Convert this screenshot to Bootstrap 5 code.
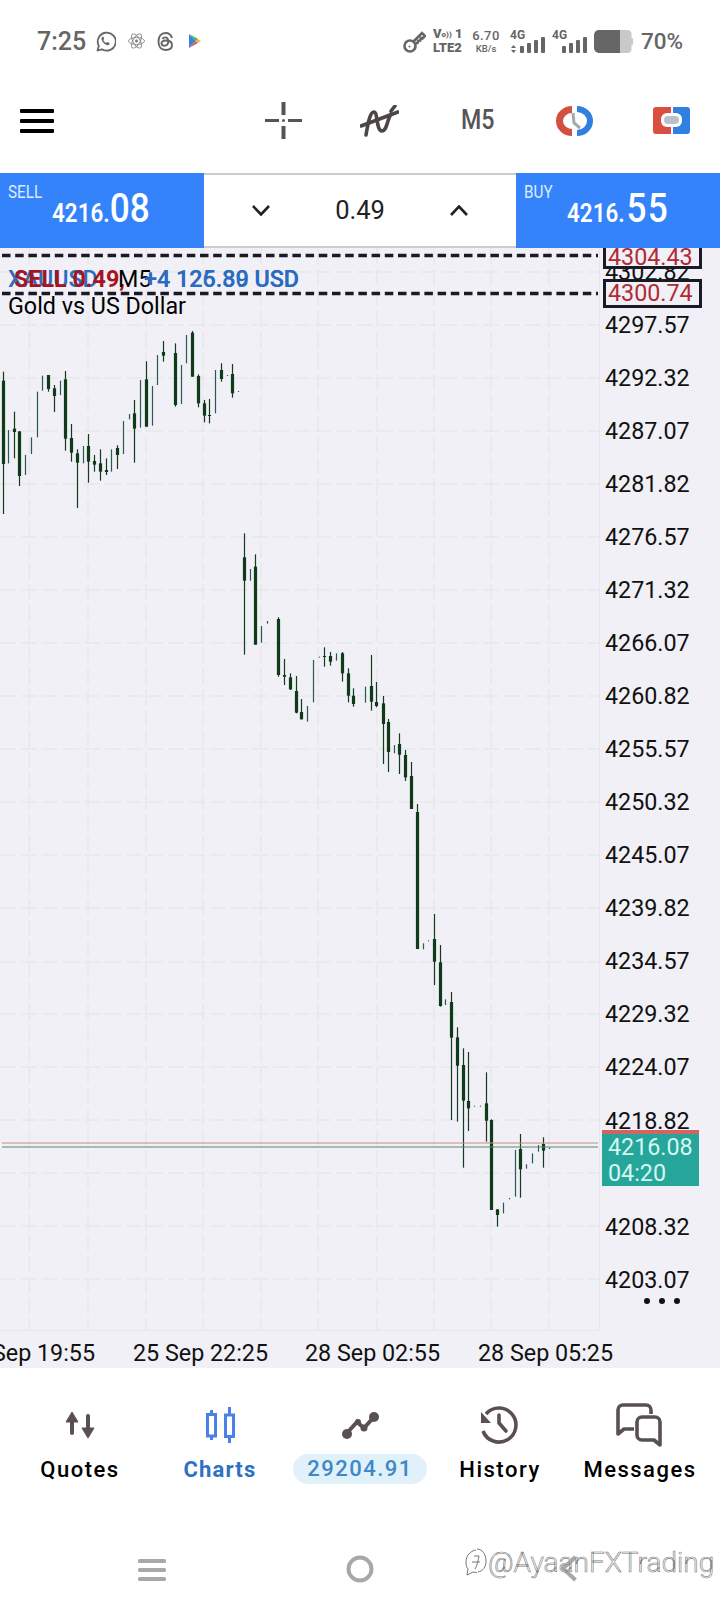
<!DOCTYPE html>
<html lang="en">
<head>
<meta charset="utf-8">
<title>Chart</title>
<link href="https://cdn.jsdelivr.net/npm/bootstrap@5.3.0/dist/css/bootstrap.min.css" rel="stylesheet">
<style>
html,body{margin:0;background:#fff}
body{width:720px;height:1608px;overflow:hidden;font-family:Roboto,"Liberation Sans",sans-serif;color:#000}
svg{display:block;flex:none}
.st-bar{height:82px;padding:0 38px 0 37px;color:#666}
.st-time{font-size:25px;font-weight:500;line-height:1;margin-right:10px;width:49px}
.st-volte{width:28px;margin-left:7px;font-weight:700;line-height:1}
.st-volte b{display:block;font-size:13px;white-space:nowrap;height:14px}
.st-volte i{font-style:normal;font-size:8px;vertical-align:1px}
.st-speed{width:28px;margin-left:11px;text-align:center;font-weight:500;line-height:1}
.st-speed b{display:block;font-weight:500;font-size:13px;letter-spacing:.4px;height:15px}
.st-speed small{display:block;font-size:9.5px}
.st-pct{font-size:22.5px;font-weight:500;margin-left:8px;width:41px;line-height:1;white-space:nowrap}
.tool-bar{height:91px;padding:0 0 14px 20px}
.m5{width:33px;margin-left:62px;font-size:27px;font-weight:500;color:#555;line-height:1;transform:scaleX(.86);transform-origin:left center}
.trade-bar{height:75px}
.quote-box{width:204px;background:#3583fb;color:#fff;padding-left:8px}
.quote-lbl{display:block;height:26px;margin-top:6px;font-size:18px;line-height:26px;color:#dcebff;transform:scaleX(.85);transform-origin:left center}
.quote-num{margin-top:-15px;line-height:38px;height:38px;white-space:nowrap;transform:scaleX(.88);transform-origin:left center;font-weight:600;font-size:25.5px}
.quote-num span{font-size:40px;font-weight:500}
.sell-num{margin-left:44px}
.buy-num{margin-left:43px}
.buy-num span{margin-left:2px;letter-spacing:1.5px}
.lot-box{flex:1;border-top:2px solid #ccc;border-bottom:2px solid #ccc;padding:0 48px;font-size:25.5px;color:#222;background:#fff}
.chart-area{height:1120px;background:#f0f0f6;overflow:hidden}
.chart-svg{position:absolute;left:0;top:0}
.axis-col{position:absolute;left:605px;top:-2.500px;width:100px}
.axis-col div{height:53.07px;line-height:53.07px;font-size:23.3px;color:#111;white-space:nowrap}
.over-txt{position:absolute;font-size:23.300px;line-height:28px;white-space:nowrap}
.t-blue{color:#2b6cc0;font-weight:500}
.t-red{color:#a8141e;font-weight:700}
.price-tag{position:absolute;left:603px;width:99px;background:#f0f0f6;border:3px solid #1a1a24;color:#b02a34;font-size:23.3px;padding-left:2px}
.cur-tag{position:absolute;left:602px;top:882px;width:97px;height:56px;background:#26a69a;border-top:4px solid #d26464;color:#d6f6f1;font-size:23.3px;line-height:26px;padding-left:6px}
.time-lbl{position:absolute;top:1091px;font-size:23.3px;line-height:28px;color:#111;white-space:nowrap}
.tab-bar{height:137px;padding:33px 10px 0}
.tab-item{width:140px}
.tab-lbl{height:30px;line-height:30px;margin-top:8px;font-size:22px;font-weight:500;letter-spacing:1.5px;white-space:nowrap}
.tab-on{color:#2d72c4;font-weight:700;letter-spacing:1.2px}
.tab-pill{width:134px;margin-top:7px;background:#e0f1fa;color:#3d88c8;letter-spacing:1.5px;font-weight:500}
.sys-bar{height:103px;padding-top:50px}
.wm-txt{position:absolute;left:488px;top:40px;font-size:28px;font-weight:300;color:rgba(255,255,255,.55);-webkit-text-stroke:.6px #777;line-height:36px;white-space:nowrap}
.wm-logo{position:absolute;left:464px;top:43px}
</style>
</head>
<body>
<div class="d-flex flex-column">

<div class="st-bar d-flex align-items-center">
  <span class="st-time">7:25</span>
  <svg width="21" height="21" viewBox="0 0 20 21" style="margin-left:-1px"><path d="M2 19.5l1.3-4.6A9 9 0 1 1 6.500 18.300Z" fill="none" stroke="#666" stroke-width="1.800" stroke-linejoin="round"/><path d="M6.800 5.800c-1.600 1.500-.8 4 1.300 6.200 2.100 2.100 4.700 2.900 6 1.300l-.4-1.500-2-.8-.9 1c-1.300-.6-2.500-1.800-3-3l.9-1-.8-2.200Z" fill="#666"/></svg>
  <svg width="17" height="20" viewBox="0 0 17 20" style="margin-left:12px" fill="none" stroke="#888" stroke-width=".9"><ellipse cx="8.500" cy="10" rx="8" ry="3.500" transform="rotate(60 8.500 10)"/><ellipse cx="8.500" cy="10" rx="8" ry="3.500" transform="rotate(-60 8.500 10)"/><ellipse cx="8.500" cy="10" rx="8" ry="3.500"/><circle cx="8.500" cy="10" r="1.200" fill="#777"/></svg>
  <svg width="17" height="19" viewBox="0 0 17 19" style="margin-left:12px" fill="none" stroke="#666" stroke-width="1.900"><path d="M15 6C14 2.500 11.500 1 8.500 1 4 1 1.500 4.500 1.500 9.500S4 18 8.500 18c4 0 6.500-2 6.500-5 0-3.500-3.500-4.500-6.500-4.500-2.500 0-4 1-4 2.700s1.500 2.500 3 2.500c2.500 0 3.700-2 3.700-4.500 0-2.200-1-3.800-3-3.800-1.300 0-2.200.6-2.800 1.500"/></svg>
  <svg width="12" height="14" viewBox="0 0 12 14" style="margin-left:15px"><path d="M0 0L7 7 0 14Z" fill="#3b82e0"/><path d="M0 0L9 5 7 7Z" fill="#4caf50"/><path d="M0 14L9 9 7 7Z" fill="#e2574c"/><path d="M9 5L12 7 9 9 7 7Z" fill="#f5b83d"/></svg>
  <div class="ms-auto d-flex align-items-center">
    <svg width="23" height="23" viewBox="0 0 23 23" fill="none" stroke="#666" stroke-width="2.600"><circle cx="7" cy="16" r="5.500"/><path d="M10.500 11.500L19 3l3 3-2.500 2.500-1.500-.5-.8 2.500-2 .3-.5 2-2 .7"/><circle cx="6.500" cy="16.500" r="1" fill="#666" stroke="none"/></svg>
    <div class="st-volte"><b>V<i>o))</i> 1</b><b>LTE2</b></div>
    <div class="st-speed"><b>6.70</b><small>KB/s</small></div>
    <svg width="78" height="25" viewBox="510 28 78 25" style="margin-left:10px" fill="#666"><text x="510" y="38" font-family="Roboto" font-size="12" font-weight="700">4G</text><path d="M511 47l2.500-3 2.500 3ZM511 49l2.500 3 2.500-3Z"/><rect x="520" y="45" width="4" height="7" rx="1"/><rect x="527" y="42" width="4" height="10" rx="1"/><rect x="534" y="39" width="4" height="13" rx="1"/><rect x="541" y="36" width="4" height="16" rx="1"/><text x="552" y="38" font-family="Roboto" font-size="12" font-weight="700">4G</text><rect x="562" y="45" width="4" height="7" rx="1"/><rect x="569" y="42" width="4" height="10" rx="1"/><rect x="576" y="39" width="4" height="13" rx="1"/><rect x="583" y="36" width="4" height="16" rx="1"/></svg>
    <svg width="39" height="23" viewBox="0 0 39 23" style="margin-left:6px"><rect x="20" y="0" width="17.500" height="23" rx="4" fill="#c9c9c9"/><rect x="37" y="8" width="2" height="7" rx="1" fill="#c9c9c9"/><path d="M5 0H26V23H5a5 5 0 0 1-5-5V5a5 5 0 0 1 5-5Z" fill="#666"/></svg>
    <span class="st-pct">70%</span>
  </div>
</div>

<div class="tool-bar d-flex align-items-center">
  <svg width="34" height="24" viewBox="0 0 34 24" fill="#000"><rect width="34" height="4" y="0" rx="1"/><rect width="34" height="4" y="10" rx="1"/><rect width="34" height="4" y="20" rx="1"/></svg>
  <svg width="37" height="37" viewBox="0 0 37 37" style="margin-left:211px" stroke="#555" fill="none"><path d="M0 18.500H14M23 18.500H37" stroke-width="3"/><path d="M18.500 0V13M18.500 24V37" stroke-width="4"/><circle cx="18.500" cy="18.500" r="1.500" fill="#555" stroke="none"/></svg>
  <svg width="39" height="32" viewBox="0 0 39 32" style="margin-left:58px" fill="none" stroke="#4e4545" stroke-width="3.600" stroke-linecap="round"><path d="M6 30C8 18 10 7 14 7c4 0 2 19 8 19 5 0 5-11 9-17"/><path d="M1 21L38 7"/><path d="M31 6L35 1"/></svg>
  <span class="m5">M5</span>
  <svg width="37" height="30" viewBox="556 106 37 30" style="margin-left:62px" fill="none"><path d="M572 109.500A12.500 11.500 0 0 0 572 132.500" stroke="#d2503f" stroke-width="7"/><path d="M577 109A13 12 0 0 1 577 133" stroke="#2f80e0" stroke-width="6"/><path d="M573 113L574 123 580 128" stroke="#a8a8ac" stroke-width="3"/></svg>
  <svg width="37" height="27" viewBox="653 107 37 27" style="margin-left:60px"><path d="M656 107H671V134H656a3 3 0 0 1-3-3V110a3 3 0 0 1 3-3Z" fill="#d95040"/><path d="M673 107H687a3 3 0 0 1 3 3V131a3 3 0 0 1-3 3H673Z" fill="#2f80e0"/><rect x="661" y="113" width="21" height="14" rx="6" fill="#fff"/><rect x="664" y="116" width="15" height="8" rx="4" fill="#b8c0cc"/></svg>
</div>

<div class="trade-bar d-flex">
  <div class="quote-box">
    <span class="quote-lbl">SELL</span>
    <div class="quote-num sell-num">4216.<span>08</span></div>
  </div>
  <div class="lot-box d-flex align-items-center justify-content-between">
    <svg width="18" height="11" viewBox="0 0 18 11" fill="none" stroke="#222" stroke-width="2.600"><path d="M1 1L9 9.500 17 1"/></svg>
    <span>0.49</span>
    <svg width="18" height="11" viewBox="0 0 18 11" fill="none" stroke="#222" stroke-width="2.600"><path d="M1 10L9 1.500 17 10"/></svg>
  </div>
  <div class="quote-box">
    <span class="quote-lbl">BUY</span>
    <div class="quote-num buy-num">4216.<span>55</span></div>
  </div>
</div>

<div class="chart-area position-relative">
  <svg class="chart-svg" id="chartSvg" width="720" height="1120" viewBox="0 248 720 1120"></svg>
  <div class="axis-col">
    <div>4302.82</div><div>4297.57</div><div>4292.32</div><div>4287.07</div><div>4281.82</div>
    <div>4276.57</div><div>4271.32</div><div>4266.07</div><div>4260.82</div><div>4255.57</div>
    <div>4250.32</div><div>4245.07</div><div>4239.82</div><div>4234.57</div><div>4229.32</div>
    <div>4224.07</div><div>4218.82</div><div></div><div>4208.32</div><div>4203.07</div>
  </div>
  <div class="price-tag" style="top:-8px;height:29px;line-height:29px">4304.43</div>
  <div class="price-tag" style="top:31px;height:29px;line-height:23px">4300.74</div>
  <div class="cur-tag">4216.08<br>04:20</div>
  <span class="over-txt t-blue" style="left:8px;top:17px">XAUUSD</span>
  <span class="over-txt t-red" style="left:14px;top:17px">SELL 0.49,</span>
  <span class="over-txt" style="left:118px;top:17px">M5</span>
  <span class="over-txt t-blue" style="left:144px;top:17px">+4 126.39 USD</span>
  <span class="over-txt t-blue" style="left:144px;top:17px">+4 125.80 USD</span>
  <span class="over-txt" style="left:8px;top:44px">Gold vs US Dollar</span>
  <span class="time-lbl" style="left:-40px">25 Sep 19:55</span>
  <span class="time-lbl" style="left:133px">25 Sep 22:25</span>
  <span class="time-lbl" style="left:305px">28 Sep 02:55</span>
  <span class="time-lbl" style="left:478px">28 Sep 05:25</span>
</div>

<div class="tab-bar d-flex">
  <div class="tab-item d-flex flex-column align-items-center">
    <svg width="50" height="46" viewBox="55 1401 50 46" fill="#5a5050" stroke="#5a5050"><path d="M72 1420V1433M88 1416V1430" stroke-width="4" stroke-linecap="round"/><path d="M66 1422L72 1412 78 1422Z" stroke-width="1" stroke-linejoin="round"/><path d="M82 1428L88 1438 94 1428Z" stroke-width="1" stroke-linejoin="round"/></svg>
    <div class="tab-lbl">Quotes</div>
  </div>
  <div class="tab-item d-flex flex-column align-items-center">
    <svg width="50" height="46" viewBox="195 1401 50 46" fill="none" stroke="#4a80e8" stroke-width="3"><rect x="207.500" y="1414.500" width="8" height="21.500"/><rect x="225.500" y="1415" width="8" height="21.500"/><path d="M211.500 1410V1414M211.500 1436V1440M229.500 1407V1414M229.500 1437V1443"/></svg>
    <div class="tab-lbl tab-on">Charts</div>
  </div>
  <div class="tab-item d-flex flex-column align-items-center">
    <svg width="50" height="46" viewBox="335 1401 50 46" fill="#5a5050"><path d="M347 1433L357 1422 364 1428 374 1417" fill="none" stroke="#5a5050" stroke-width="4"/><circle cx="347" cy="1434" r="5"/><circle cx="358" cy="1422" r="3"/><circle cx="364" cy="1428" r="3.500"/><circle cx="374" cy="1417" r="5"/></svg>
    <div class="tab-lbl tab-pill rounded-pill text-center">29204.91</div>
  </div>
  <div class="tab-item d-flex flex-column align-items-center">
    <svg width="50" height="46" viewBox="475 1401 50 46" fill="none" stroke="#5a5050" stroke-width="3.600"><path d="M486 1414A17 17 0 1 1 483 1431"/><path d="M481 1412V1423H491Z" fill="#5a5050" stroke="none"/><path d="M499 1415V1423L506 1431" stroke-linecap="round"/></svg>
    <div class="tab-lbl">History</div>
  </div>
  <div class="tab-item d-flex flex-column align-items-center">
    <svg width="50" height="46" viewBox="615 1401 50 46" fill="none" stroke="#5a5050" stroke-width="3.600" stroke-linejoin="round"><path d="M651 1414V1410a5 5 0 0 0-5-5H623a5 5 0 0 0-5 5V1434L624 1429H634"/><path d="M642 1417H655a5 5 0 0 1 5 5V1445L654 1440H642a5 5 0 0 1-5-5V1422a5 5 0 0 1 5-5Z"/></svg>
    <div class="tab-lbl">Messages</div>
  </div>
</div>

<div class="sys-bar position-relative d-flex align-items-start">
  <svg width="28" height="24" viewBox="0 0 28 24" style="margin-left:138px;margin-top:3px" fill="#a8a8a8"><rect width="28" height="4" y="1" rx="1.500"/><rect width="28" height="4" y="10" rx="1.500"/><rect width="28" height="4" y="19" rx="1.500"/></svg>
  <svg width="28" height="28" viewBox="0 0 28 28" style="margin-left:180px" fill="none" stroke="#a8a8a8" stroke-width="4"><circle cx="14" cy="14" r="11.500"/></svg>
  <svg width="17" height="27" viewBox="0 0 17 27" style="margin-left:186px" fill="none" stroke="#a8a8a8" stroke-width="4"><path d="M15.500 2L3 13.500 15.500 25"/></svg>
  <svg class="wm-logo" width="24" height="30" viewBox="0 0 24 30" fill="none" stroke="#777" stroke-width="1"><path d="M12 2C6 3 2 8 2 14c0 3 .5 5 2 7l-1 6 6-3c1.500.4 3 .5 4 .3"/><path d="M13 1c5 0 9 5 9 12 0 6-3 10-8 11"/><path d="M10 8h5c-1 5-2 10-4 13M8 14h8"/></svg>
  <span class="wm-txt">@AyaanFXTrading</span>
</div>
</div>

<script src="https://cdn.jsdelivr.net/npm/bootstrap@5.3.0/dist/js/bootstrap.bundle.min.js"></script>
<script>
(function(){
  /* candle readings: [x, wickTop, wickBottom, bodyTop, bodyBottom], with three crop origins */
  var a=[[8,155,582,182,432],[25,330,430],[43,275,415,326,336],[58,334,498,334,468],[76,405,465],[94,352,402],[112,215,352],[127,167,212],[145,165,215,165,207],[163,195,276,205,228],[181,182,225],[196,153,392,178,356],[214,312,425,354,398],[232,388,564,400,428],[250,378,430],[265,342,488,378,425],[283,405,455,423,434],[301,388,482,430,455],[319,415,465,450,456],[334,388,455],[352,376,447,384,405],[370,303,402],[388,282,298],[403,240,428,280,326],[421,180,323],[439,124,320,178,320],[457,198,317],[472,105,195],[490,63,125,96,107],[526,70,260,99,255],[544,135,252],[559,45,130],[577,33,170,38,170],[595,163,262,168,250],[613,240,307,250,287],[628,237,310,285,288],[646,150,280],[664,130,185,150,177],[682,165,168],[697,132,233,162,220],[715,213,216],[733,640,1004,712,782],[751,747,782],[766,703,974,740,974],[784,918,968],[802,903,911],[835,892,1070,897,1065],[853,1017,1095,1065,1070],[871,1060,1110,1072,1108],[889,1068,1180,1113,1178],[904,1137,1198,1176,1198],[922,1158,1205],[940,1020,1147],[958,1010,1013],[973,982,1040,1008,1011],[991,996,1037,1008,1025],[1009,1000,1022],[1027,996,1085,1000,1060],[1045,1045,1147,1060,1127],[1060,1105,1160,1127,1152]];
  var b=[[15,200,248],[34,105,272,198,245],[49,186,262,246,258],[68,228,432,250,312],[85,297,456,306,396],[103,375,400],[118,340,462,372,404],[136,390,483,405,472],[154,426,567,468,567],[172,552,987,576,987]];
  var c=[[68,40,58],[85,31,34],[103,-48,165,27,95],[121,45,230,97,228],[136,208,225],[154,186,570,216,323],[172,292,575,322,407],[190,355,713,405,512],[205,366,603,513,535],[223,527,530],[241,527,530],[259,427,635,520,572],[274,568,840,570,840],[292,838,890,838,855],[310,818,850],[328,804,808],[346,660,800],[361,612,803,657,718],[379,703,716],[397,670,700],[415,645,665],[430,622,713,642,662],[448,653,657]];
  var s='',i,y;
  var hs=[272,325,378,431,484,537,590,643,696,749,802,855,908,962,1014,1067,1120,1173,1226,1279];
  var vs=[29.3,88,146,203,261,318,377,434,491,549];
  for(i=0;i<hs.length;i++){y=hs[i];s+='<line x1="0" x2="599" y1="'+y+'" y2="'+y+'" stroke="#e6e6ec" stroke-width="1.5" stroke-dasharray="16 5"/>';}
  for(i=0;i<vs.length;i++){s+='<line y1="248" y2="1330" x1="'+vs[i]+'" x2="'+vs[i]+'" stroke="#e6e6ec" stroke-width="1.5" stroke-dasharray="16 5"/>';}
  s+='<path d="M599.500 248V1330M0 1330.500H600" stroke="#e6e6ec" fill="none"/>';
  function draw(list,ox,oy){
    list.forEach(function(d){
      var x=Math.round(ox+d[0]/3)+.5, t=oy+d[1]/3, u=oy+d[2]/3;
      if(d.length<5){s+='<rect x="'+(x-.6)+'" y="'+t+'" width="1.2" height="'+(u-t)+'" fill="#2a5a55"/>';return;}
      s+='<rect x="'+(x-.6)+'" y="'+t+'" width="1.2" height="'+(u-t)+'" fill="#143a20"/>';
      s+='<rect x="'+(x-1.6)+'" y="'+(oy+d[3]/3)+'" width="3.2" height="'+((d[4]-d[3])/3)+'" fill="#113a18"/>';
    });
  }
  draw(a,0,320);draw(b,360,620);draw(c,400,930);
  s+='<line x1="2" x2="598" y1="1143" y2="1143" stroke="#d08a84" stroke-width="1.2"/>';
  s+='<line x1="2" x2="598" y1="1147" y2="1147" stroke="#4f8a6e" stroke-width="1.2"/>';
  s+='<line x1="2" x2="598" y1="255.500" y2="255.500" stroke="#1a1a24" stroke-width="3.400" stroke-dasharray="8.500 4.700"/>';
  s+='<line x1="2" x2="598" y1="293.500" y2="293.500" stroke="#1a1a24" stroke-width="3.400" stroke-dasharray="8.500 4.700"/>';
  s+='<circle cx="647" cy="1301" r="3" fill="#111"/><circle cx="662" cy="1301" r="3" fill="#111"/><circle cx="677" cy="1301" r="3" fill="#111"/>';
  document.getElementById('chartSvg').innerHTML=s;
})();
</script>
</body>
</html>
